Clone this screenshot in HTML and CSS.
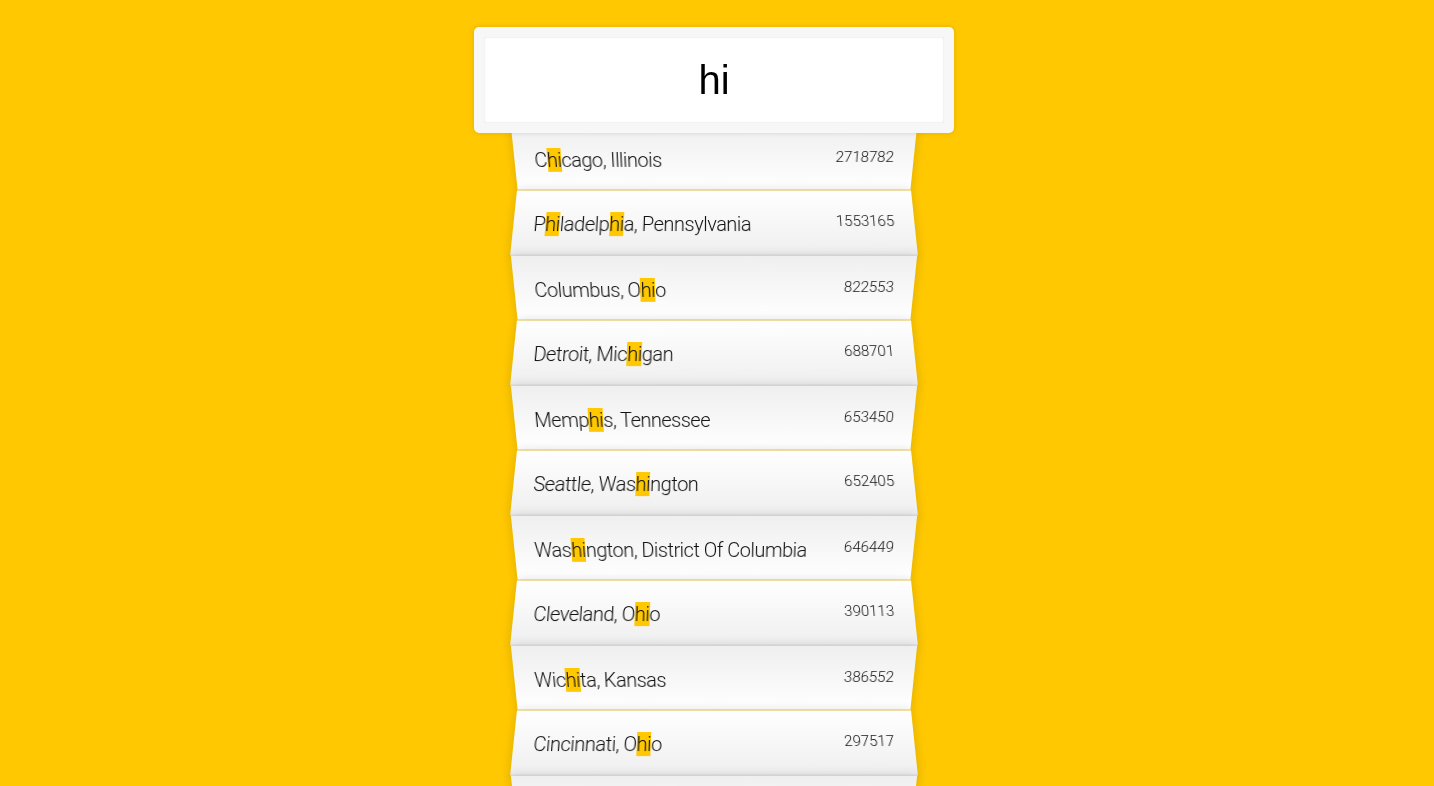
FILE: index.html
```html
<!DOCTYPE html>
<html lang="en">
<head>
<meta charset="utf-8">
<title>Type Ahead</title>
<link rel="stylesheet" href="styles.css">
</head>
<body>
<div class="page">
  <form class="search-form">
    <input type="text" class="search" value="hi" autofocus>
    <ul class="suggestions">
      <li><span class="name">C<span class="hl">hi</span>cago, Illinois</span><span class="population">2718782</span></li>
      <li><span class="name">P<span class="hl">hi</span>ladelp<span class="hl">hi</span>a, Pennsylvania</span><span class="population">1553165</span></li>
      <li><span class="name">Columbus, O<span class="hl">hi</span>o</span><span class="population">822553</span></li>
      <li><span class="name">Detroit, Mic<span class="hl">hi</span>gan</span><span class="population">688701</span></li>
      <li><span class="name">Memp<span class="hl">hi</span>s, Tennessee</span><span class="population">653450</span></li>
      <li><span class="name">Seattle, Was<span class="hl">hi</span>ngton</span><span class="population">652405</span></li>
      <li><span class="name">Was<span class="hl">hi</span>ngton, District Of Columbia</span><span class="population">646449</span></li>
      <li><span class="name">Cleveland, O<span class="hl">hi</span>o</span><span class="population">390113</span></li>
      <li><span class="name">Wic<span class="hl">hi</span>ta, Kansas</span><span class="population">386552</span></li>
      <li><span class="name">Cincinnati, O<span class="hl">hi</span>o</span><span class="population">297517</span></li>
      <li><span class="name">Toledo, O<span class="hl">hi</span>o</span><span class="population">282313</span></li>
    </ul>
  </form>
</div>
</body>
</html>
```

FILE: styles.css
```css
*, *::before, *::after {
  box-sizing: border-box;
}

html {
  background: #ffc800;
  font-family: "Helvetica Neue", Roboto, "Liberation Sans", sans-serif;
  font-size: 20px;
  font-weight: 300;
}

body {
  margin: 0;
}

.page {
  padding-top: 27px;
  padding-right: 6px;
}

.search-form {
  width: 400px;
  margin: 0 auto;
}

input.search {
  display: block;
  position: relative;
  z-index: 2;
  width: 480px;
  margin: 0 0 -10px -40px;
  padding: 20px;
  height: 106px;
  line-height: 46px;
  text-align: center;
  outline: 0;
  border: 10px solid #f7f7f7;
  border-radius: 5px;
  background: #fff;
  font-family: "Liberation Sans", Arial, sans-serif;
  font-size: 40px;
  font-weight: 400;
  color: #000;
  caret-color: #000;
  box-shadow: 0 0 5px rgba(0, 0, 0, 0.12), inset 0 0 2px rgba(0, 0, 0, 0.19);
}

.suggestions {
  margin: 0;
  padding: 0;
  list-style: none;
}

.suggestions li {
  display: flex;
  justify-content: space-between;
  margin: 0;
  padding: 22px 20px 18px;
  line-height: 24px;
  color: #111;
  background: #fff;
  border-bottom: 1px solid #d8d8d8;
  box-shadow: 0 0 10px rgba(0, 0, 0, 0.14);
}

.suggestions li:nth-child(odd) {
  transform: perspective(100px) rotateX(-3deg) translateY(3px);
  background: linear-gradient(to top, #ffffff 0%, #efefef 100%);
}

.suggestions li:nth-child(even) {
  transform: perspective(100px) rotateX(3deg) translateY(2px) scale(1.001);
  background: linear-gradient(to bottom, #ffffff 0%, #efefef 100%);
}

.name {
  letter-spacing: -0.5px;
}

.population {
  font-size: 15px;
  line-height: 18px;
}

.hl {
  background: #ffc800;
}
```
